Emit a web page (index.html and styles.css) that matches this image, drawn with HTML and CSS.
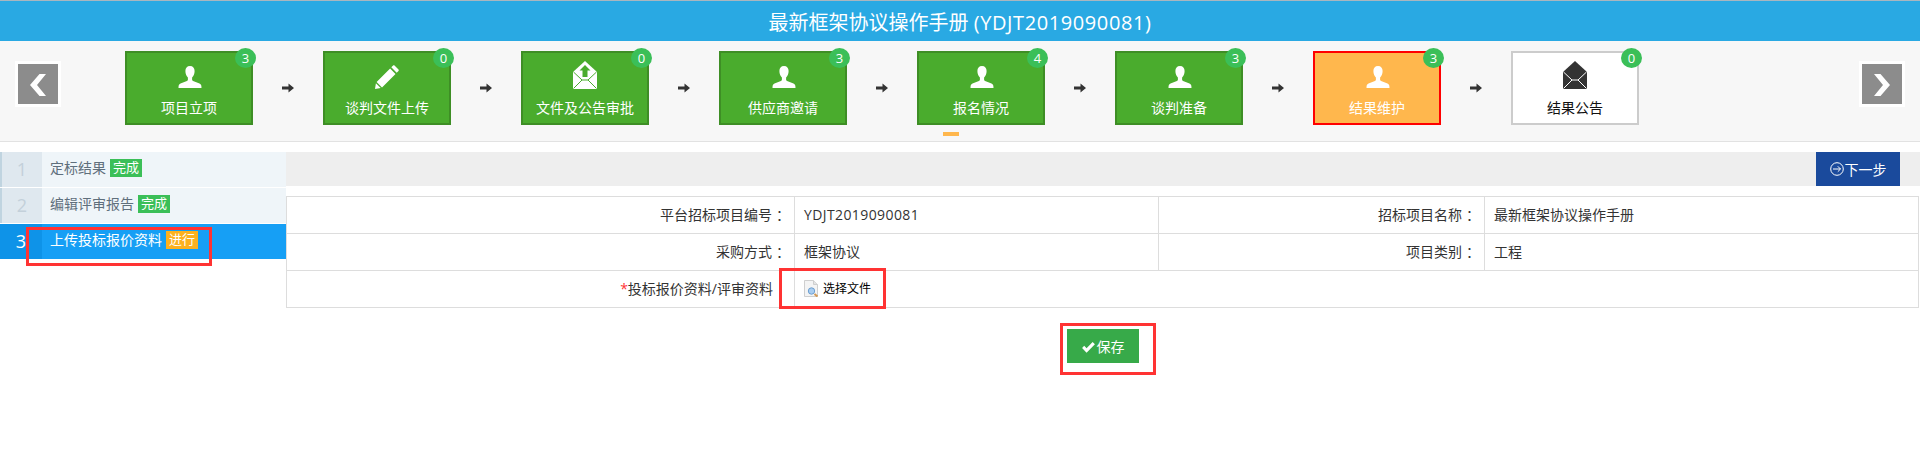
FILE: index.html
```html
<!DOCTYPE html>
<html lang="zh-CN">
<head>
    <meta charset="UTF-8">
    <title>最新框架协议操作手册</title>
    <link rel="stylesheet" href="styles.css">
</head>
<body>
    <svg class="icon-defs" width="0" height="0">
        <symbol id="i-user" viewBox="0 0 24 24">
            <path d="M12 1c-3 0-4.600 2.100-4.600 5 0 2.600 1 5 2.500 6.500v2.200c0 .6-.4 1.100-1 1.400L2.500 18.500C.8 19.300.5 20.500.5 23h23c0-2.500-.3-3.700-2-4.500l-6.400-2.400c-.6-.3-1-.8-1-1.400v-2.200c1.500-1.500 2.500-3.900 2.500-6.500 0-2.900-1.600-5-4.600-5z"/>
        </symbol>
        <symbol id="i-pencil" viewBox="0 0 24 24">
            <path d="M19.500.5l4 4c.4.400.4 1 0 1.400l-1.800 1.800-5.400-5.400L18.100.5c.4-.4 1-.4 1.400 0zM15.100 3.500l5.400 5.400L7 22.400l-5.400-5.400zM.9 18.300l4.800 4.800L0 24z"/>
        </symbol>
        <symbol id="i-mail-up" viewBox="0 0 24 28">
            <path fill="#fff" d="M12 0L0 11v17h24V11z"/>
            <path fill="none" stroke="#4aac2d" d="M.5 11l8.500 8-8.500 8.500M23.500 11L15 19l8.500 8.500M9 19h6"/>
            <path fill="#4aac2d" d="M12 4l5.500 5.500h-3v6.500h-5V9.500h-3z"/>
        </symbol>
        <symbol id="i-mail" viewBox="0 0 24 28">
            <path fill="#333" d="M12 0L0 11v17h24V11z"/>
            <path fill="none" stroke="#fff" d="M.5 11l8.500 8-8.500 8.500M23.500 11L15 19l8.500 8.500M9 19h6"/>
        </symbol>
        <symbol id="i-arrow" viewBox="0 0 12 10">
            <path d="M0 3.500h6.500V0.500L12 5 6.500 9.500v-3H0z"/>
        </symbol>
    </svg>

    <div class="header">最新框架协议操作手册 <span class="latin-title">(YDJT2019090081)</span></div>

    <div class="stepbar">
        <a class="page-btn">
            <svg viewBox="0 0 40 40"><path d="M21.500 10H28l-9 11 9 11h-6.500L12 21z"/></svg>
        </a>
        <div class="steps">
            <div class="step"><span class="badge">3</span><svg class="step-icon user"><use href="#i-user"/></svg><span class="step-name">项目立项</span></div>
            <svg class="step-arrow"><use href="#i-arrow"/></svg>
            <div class="step"><span class="badge">0</span><svg class="step-icon"><use href="#i-pencil"/></svg><span class="step-name">谈判文件上传</span></div>
            <svg class="step-arrow"><use href="#i-arrow"/></svg>
            <div class="step step-mail"><span class="badge">0</span><svg class="step-icon"><use href="#i-mail-up"/></svg><span class="step-name">文件及公告审批</span></div>
            <svg class="step-arrow"><use href="#i-arrow"/></svg>
            <div class="step"><span class="badge">3</span><svg class="step-icon user"><use href="#i-user"/></svg><span class="step-name">供应商邀请</span></div>
            <svg class="step-arrow"><use href="#i-arrow"/></svg>
            <div class="step step-marked"><span class="badge">4</span><svg class="step-icon user"><use href="#i-user"/></svg><span class="step-name">报名情况</span></div>
            <svg class="step-arrow"><use href="#i-arrow"/></svg>
            <div class="step"><span class="badge">3</span><svg class="step-icon user"><use href="#i-user"/></svg><span class="step-name">谈判准备</span></div>
            <svg class="step-arrow"><use href="#i-arrow"/></svg>
            <div class="step step-active"><span class="badge">3</span><svg class="step-icon user"><use href="#i-user"/></svg><span class="step-name">结果维护</span></div>
            <svg class="step-arrow"><use href="#i-arrow"/></svg>
            <div class="step step-mail step-todo"><span class="badge">0</span><svg class="step-icon"><use href="#i-mail"/></svg><span class="step-name">结果公告</span></div>
        </div>
        <a class="page-btn">
            <svg viewBox="0 0 40 40"><path d="M18.500 10H12l9 11-9 11h6.500L28 21z"/></svg>
        </a>
    </div>

    <div class="content">
        <div class="sidebar">
            <div class="side-row">
                <span class="side-num">1</span>
                <span class="side-name">定标结果</span>
                <span class="tag">完成</span>
            </div>
            <div class="side-row">
                <span class="side-num">2</span>
                <span class="side-name">编辑评审报告</span>
                <span class="tag">完成</span>
            </div>
            <div class="side-row side-current">
                <span class="side-num">3</span>
                <span class="side-name">上传投标报价资料</span>
                <span class="tag tag-doing">进行</span>
                <i class="mark mark-side"></i>
            </div>
        </div>

        <div class="main">
            <div class="toolbar">
                <button class="next-btn">
                    <svg viewBox="0 0 14 14"><circle cx="7" cy="7" r="6.300"/><path d="M3 7h7.500M7.800 4.300L10.500 7 7.800 9.700"/></svg>
                    下一步
                </button>
            </div>

            <table class="info">
                <tr>
                    <td class="label w1">平台招标项目编号<span class="colon">：</span></td>
                    <td class="value w2"><span class="latin">YDJT2019090081</span></td>
                    <td class="label w3">招标项目名称<span class="colon">：</span></td>
                    <td class="value">最新框架协议操作手册</td>
                </tr>
                <tr>
                    <td class="label">采购方式<span class="colon">：</span></td>
                    <td class="value">框架协议</td>
                    <td class="label">项目类别<span class="colon">：</span></td>
                    <td class="value">工程</td>
                </tr>
                <tr>
                    <td class="label label-req"><span class="req">*</span>投标报价资料/评审资料</td>
                    <td class="value" colspan="3">
                        <span class="file-pick">
                            <svg viewBox="0 0 15 17">
                                <path d="M.5.500h9l4 4v12H.5z" fill="#f4f4f4" stroke="#cfcfcf"/>
                                <path d="M9.500.500v4h4" fill="#e4e4e4" stroke="#cfcfcf"/>
                                <circle cx="7.500" cy="11" r="3.200" fill="#a9cdf0" stroke="#6e9fd0"/>
                                <path d="M10.500 14l3 2.500" stroke="#d39a55" stroke-width="2"/>
                            </svg>
                            选择文件
                        </span>
                        <i class="mark mark-file"></i>
                    </td>
                </tr>
            </table>

            <div class="save-row">
                <button class="save-btn">
                    <svg viewBox="0 0 14 12"><path d="M0 6.500l2.300-2.300 2.600 2.600L11.500 0 14 2.500 4.900 11.700z"/></svg>
                    保存
                </button>
                <i class="mark mark-save"></i>
            </div>
        </div>
    </div>
</body>
</html>
```

FILE: styles.css
```css
* {
    margin: 0;
    padding: 0;
    box-sizing: border-box;
}

body {
    font-family: "Open Sans", "Noto Sans CJK SC", sans-serif;
    font-size: 14px;
    color: #333;
    background: #fff;
}

.icon-defs {
    position: absolute;
}

.header {
    height: 41px;
    line-height: 44px;
    border-top: 1px solid #a9b6bf;
    background: #29a9e3;
    color: #fff;
    font-size: 20px;
    text-align: center;
}

.latin-title {
    letter-spacing: .6px;
}

/* step bar */
.stepbar {
    display: flex;
    height: 101px;
    padding: 0 15px;
    background: #f7f7f7;
    border-bottom: 1px solid #e2e2e2;
}

.page-btn {
    width: 46px;
    height: 46px;
    margin-top: 20px;
    border: 3px solid #fff;
    background: #8c8c8c;
}

.page-btn svg {
    display: block;
    width: 40px;
    height: 40px;
    fill: #fff;
}

.steps {
    flex: 1;
    display: flex;
    align-items: flex-start;
    padding: 10px 0 0 64px;
}

.step {
    position: relative;
    display: flex;
    flex-direction: column;
    align-items: center;
    width: 128px;
    height: 74px;
    padding-top: 12px;
    border: 2px solid #3e8e25;
    background: #4aac2d;
    color: #fff;
}

.step-icon {
    width: 24px;
    height: 24px;
    fill: #fff;
}

.step-icon.user {
    margin-left: 2px;
}

.step-mail {
    padding-top: 8px;
}

.step-mail .step-icon {
    height: 28px;
}

.step-name {
    margin-top: 9px;
    line-height: 20px;
}

.step-active {
    background: #ffb74d;
    border-color: #f00;
}

.step-todo {
    background: #fff;
    border-color: #ccc;
    color: #111;
}

.step-marked::after {
    content: "";
    position: absolute;
    left: 24px;
    top: 79px;
    width: 16px;
    height: 4px;
    background: #ffb74d;
}

.badge {
    position: absolute;
    top: -5px;
    right: -5px;
    width: 21px;
    height: 20px;
    border-radius: 50%;
    background: #3bbf58;
    color: #fff;
    font-size: 13px;
    line-height: 20px;
    text-align: center;
}

.step-arrow {
    width: 12px;
    height: 10px;
    margin: 32px 29px 0;
    fill: #333;
    flex: none;
}

/* content */
.content {
    display: flex;
    margin-top: 10px;
}

.sidebar {
    width: 286px;
    flex: none;
}

.side-row {
    position: relative;
    display: flex;
    align-items: flex-start;
    height: 35px;
    margin-bottom: 1px;
    background: #eff5f9;
    color: #5f6f7c;
}

.side-num {
    width: 42px;
    height: 35px;
    margin-right: 8px;
    border-left: 2px solid #c0d4e0;
    background: #dfe8ef;
    color: #c3d0da;
    font-size: 18px;
    line-height: 35px;
    text-align: center;
}

.side-name {
    margin-top: 6px;
    line-height: 20px;
}

.tag {
    width: 32px;
    height: 18px;
    margin: 7px 0 0 4px;
    background: #3bbf58;
    color: #fff;
    font-size: 13px;
    line-height: 17px;
    text-align: center;
}

.side-current {
    background: #169ff5;
    color: #fff;
}

.side-current .side-num {
    border-left: 0;
    background: #0e93e8;
    color: #fff;
}

.tag-doing {
    background: #fdb11f;
}

.main {
    flex: 1;
    min-width: 0;
}

.toolbar {
    display: flex;
    justify-content: flex-end;
    height: 34px;
    padding-right: 20px;
    background: #eee;
}

.next-btn {
    display: flex;
    align-items: center;
    justify-content: center;
    gap: 1px;
    width: 84px;
    border: 0;
    background: #1a4a9c;
    color: #fff;
    font: inherit;
}

.next-btn svg {
    width: 14px;
    height: 14px;
    fill: none;
    stroke: #fff;
    stroke-width: 1;
}

.info {
    width: 1633px;
    margin-top: 10px;
    border-collapse: collapse;
    table-layout: fixed;
}

.info td {
    position: relative;
    height: 37px;
    padding-bottom: 2px;
    border: 1px solid #ddd;
}

.w1 {
    width: 508px;
}

.w2 {
    width: 364px;
}

.w3 {
    width: 326px;
}

.label {
    padding-right: 4px;
    text-align: right;
}

.colon {
    margin-left: 4px;
    font-family: "Noto Sans CJK TC", sans-serif;
}

.label-req {
    padding-right: 21px;
}

.req {
    color: #f33;
}

.value {
    padding-left: 9px;
}

.latin {
    letter-spacing: .4px;
}

.file-pick {
    display: flex;
    align-items: center;
    gap: 4px;
    color: #000;
    font-size: 12px;
}

.file-pick svg {
    width: 15px;
    height: 17px;
}

.save-row {
    position: relative;
    width: 96px;
    height: 52px;
    margin: 15px 0 0 774px;
    padding: 6px 7px;
}

.save-btn {
    display: flex;
    align-items: center;
    justify-content: center;
    gap: 2px;
    width: 72px;
    height: 34px;
    border: 0;
    background: #37aa49;
    color: #fff;
    font: inherit;
}

.save-btn svg {
    width: 13px;
    height: 11px;
    margin-top: 3px;
    fill: #fff;
}

/* red annotation frames */
.mark {
    position: absolute;
    border: 3px solid #f33;
}

.mark-side {
    left: 26px;
    top: 3px;
    width: 186px;
    height: 39px;
}

.mark-file {
    left: -16px;
    top: -3px;
    width: 107px;
    height: 41px;
}

.mark-save {
    inset: 0;
}
```
